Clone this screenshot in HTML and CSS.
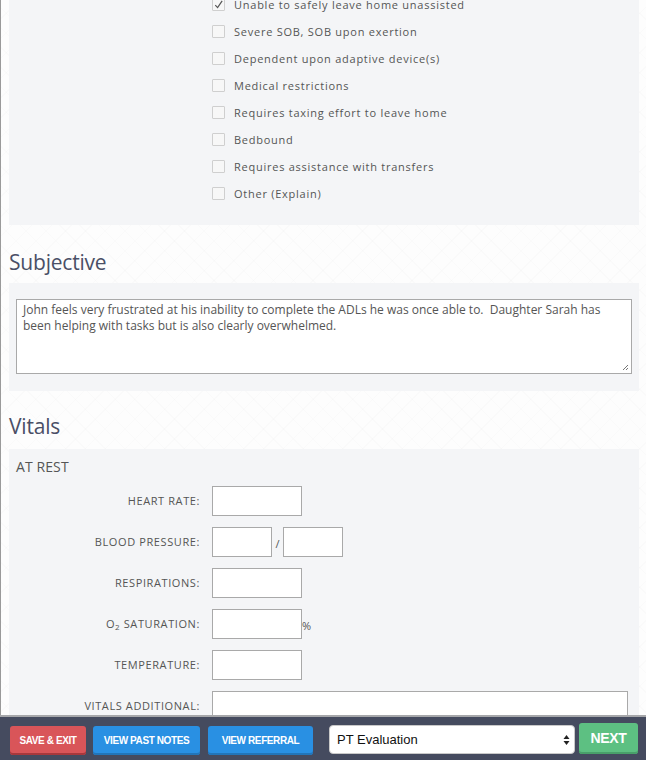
FILE: index.html
```html
<!DOCTYPE html>
<html>
<head>
<meta charset="utf-8">
<link rel="stylesheet" href="styles.css">
</head>
<body>
<div class="page">
  <div class="content">
    <section class="panel checks">
      <label class="check"><span class="box checked"><svg viewBox="0 0 12 12" width="12" height="12"><path d="M2.5 6.2 L5 8.8 L10 1.5" fill="none" stroke="#555" stroke-width="1.3"/></svg></span>Unable to safely leave home unassisted</label>
      <label class="check"><span class="box"></span>Severe SOB, SOB upon exertion</label>
      <label class="check"><span class="box"></span>Dependent upon adaptive device(s)</label>
      <label class="check"><span class="box"></span>Medical restrictions</label>
      <label class="check"><span class="box"></span>Requires taxing effort to leave home</label>
      <label class="check"><span class="box"></span>Bedbound</label>
      <label class="check"><span class="box"></span>Requires assistance with transfers</label>
      <label class="check"><span class="box"></span>Other (Explain)</label>
    </section>

    <h2 class="heading">Subjective</h2>
    <section class="panel subj">
      <div class="textarea">John feels very frustrated at his inability to complete the ADLs he was once able to.&nbsp; Daughter Sarah has been helping with tasks but is also clearly overwhelmed.<svg class="grip" viewBox="0 0 8 8" width="8" height="8"><path d="M7 2 L2 7 M7 5 L5 7" stroke="#777" stroke-width="1"/></svg></div>
    </section>

    <h2 class="heading heading-vitals">Vitals</h2>
    <section class="panel vitals">
      <div class="subhead">AT REST</div>
      <div class="row"><span class="lbl">HEART RATE:</span><span class="inp"></span></div>
      <div class="row"><span class="lbl">BLOOD PRESSURE:</span><span class="inp half"></span><span class="slash">/</span><span class="inp half"></span></div>
      <div class="row"><span class="lbl">RESPIRATIONS:</span><span class="inp"></span></div>
      <div class="row"><span class="lbl">O<sub>2</sub> SATURATION:</span><span class="inp"></span><span class="pct">%</span></div>
      <div class="row"><span class="lbl">TEMPERATURE:</span><span class="inp"></span></div>
      <div class="row"><span class="lbl">VITALS ADDITIONAL:</span><span class="inp wide"></span></div>
    </section>
  </div>

  <footer class="bar">
    <button class="btn red">SAVE &amp; EXIT</button>
    <button class="btn blue past">VIEW PAST NOTES</button>
    <button class="btn blue ref">VIEW REFERRAL</button>
    <div class="select">PT Evaluation<svg class="arrows" viewBox="0 0 7 12" width="7" height="12"><path d="M3.5 1 L6.5 5 L0.5 5 Z M3.5 11 L6.5 7 L0.5 7 Z" fill="#222"/></svg></div>
    <button class="btn green">NEXT</button>
  </footer>
</div>
</body>
</html>
```
FILE: styles.css
```css
* { box-sizing: border-box; }
html, body { margin: 0; padding: 0; }
body {
  width: 646px;
  height: 760px;
  overflow: hidden;
  font-family: "Open Sans", "DejaVu Sans", sans-serif;
  background-color: #fdfdfd;
  background-image:
    repeating-linear-gradient(45deg, rgba(0,0,0,0.012) 0 1px, transparent 1px 14px),
    repeating-linear-gradient(-45deg, rgba(0,0,0,0.012) 0 1px, transparent 1px 14px);
}
.page {
  position: relative;
  display: flow-root;
  height: 760px;
  border-left: 1px solid #9a9a9a;
}
.content {
  padding: 0 7px 0 8px;
  margin-top: -17px;
}
.panel {
  background: #f4f5f7;
}
.checks {
  padding: 8px 0 18px 203px;
}
.check {
  display: flex;
  align-items: center;
  height: 27px;
  font-size: 11px;
  letter-spacing: 0.75px;
  color: #555;
}
.box {
  width: 13px;
  height: 13px;
  border: 1px solid #cfcfcf;
  background: #f7f7f7;
  margin-right: 9px;
  display: flex;
  align-items: center;
  justify-content: center;
  border-radius: 1px;
}
.heading {
  margin: 0;
  font-weight: 400;
  font-size: 21px;
  color: #4a4f66;
  height: 58px;
  padding-top: 22px;
  line-height: 30px;
  letter-spacing: -0.2px;
}
.heading-vitals {
  padding-top: 20px;
}
.subj {
  padding: 16px 7px 17px 7px;
}
.textarea {
  position: relative;
  height: 75px;
  background: #fff;
  border: 1px solid #a9a9a9;
  padding: 2px 6px;
  font-size: 12px;
  line-height: 16px;
  color: #555;
  letter-spacing: 0;
}
.grip {
  position: absolute;
  right: 2px;
  bottom: 2px;
}
.vitals {
  padding: 6px 10px 20px 7px;
}
.subhead {
  font-size: 14px;
  color: #555;
  height: 25px;
  line-height: 24px;
  letter-spacing: 0.1px;
}
.row {
  display: flex;
  align-items: center;
  height: 41px;
}
.lbl {
  width: 196px;
  text-align: right;
  padding-right: 12px;
  font-size: 11px;
  letter-spacing: 0.6px;
  color: #555;
  flex: none;
}
.lbl sub {
  font-size: 8px;
  vertical-align: -2px;
  line-height: 0;
}
.inp {
  display: block;
  width: 90px;
  height: 30px;
  background: #fff;
  border: 1px solid #a9a9a9;
  flex: none;
}
.inp.half { width: 60px; }
.inp.wide { width: 416px; }
.slash {
  width: 11px;
  text-align: center;
  font-size: 11px;
  color: #555;
  padding-top: 4px;
}
.pct {
  font-size: 11px;
  color: #555;
  padding-top: 4px;
}
.bar {
  position: absolute;
  left: -1px;
  right: 0;
  top: 715px;
  height: 45px;
  background: #454b5f;
  border-top: 2px solid #a6a7aa;
  display: flex;
  align-items: center;
  padding: 0 8px 0 10px;
}
.btn {
  font-family: "Liberation Sans", Arial, sans-serif;
  font-weight: 700;
  font-size: 10px;
  letter-spacing: -0.4px;
  color: #fff;
  border: none;
  border-radius: 3px;
  height: 29px;
  padding: 0;
  margin-top: 3px;
}
.red {
  width: 76px;
  background: #d95559;
  box-shadow: inset 0 -2px 0 #a8383c;
}
.blue {
  background: #2990e3;
  box-shadow: inset 0 -2px 0 #2275b9;
}
.past { width: 107px; margin-left: 7px; }
.ref { width: 105px; margin-left: 8px; }
.select {
  position: relative;
  width: 246px;
  height: 29px;
  margin-left: 16px;
  margin-top: 1px;
  background: #fff;
  border-radius: 4px;
  border: 1px solid #c9c9c9;
  font-family: "Liberation Sans", Arial, sans-serif;
  font-size: 13px;
  color: #111;
  display: flex;
  align-items: center;
  padding-left: 7px;
}
.arrows {
  position: absolute;
  right: 4px;
  top: 8px;
}
.green {
  width: 59px;
  height: 31px;
  margin-left: 4px;
  margin-top: -1px;
  background: #5dc082;
  box-shadow: inset 0 -2px 0 #49a06a;
  font-size: 14px;
  letter-spacing: -0.3px;
}
```
